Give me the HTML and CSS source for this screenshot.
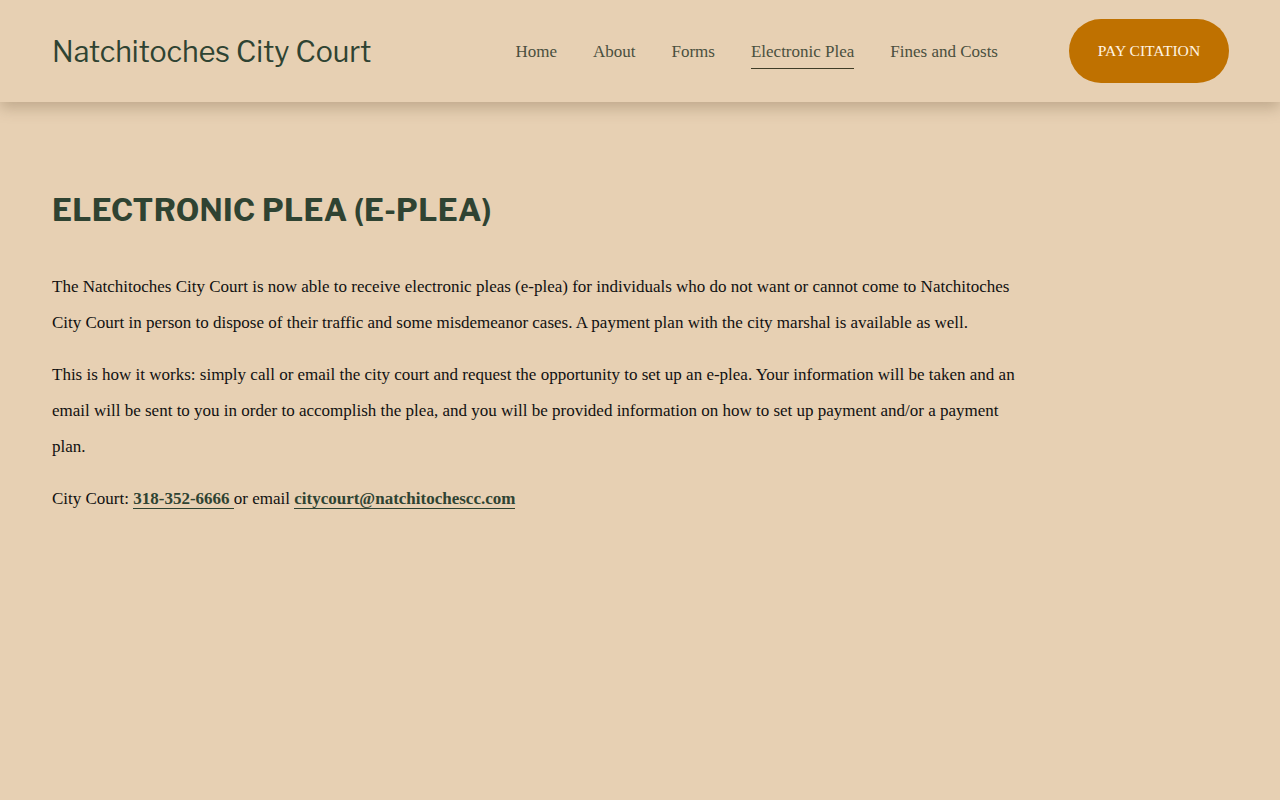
FILE: index.html
```html
<!DOCTYPE html>
<html lang="en">
<head>
<meta charset="utf-8">
<title>Electronic Plea — Natchitoches City Court</title>
<link rel="stylesheet" href="styles.css">
</head>
<body>
<header class="site-header">
  <a class="site-title" href="#">Natchitoches City Court</a>
  <nav class="main-nav">
    <a href="#">Home</a>
    <a href="#">About</a>
    <a href="#">Forms</a>
    <a href="#" class="active">Electronic Plea</a>
    <a href="#">Fines and Costs</a>
  </nav>
  <a class="pay-btn" href="#">PAY CITATION</a>
</header>
<main class="content">
  <h1 class="page-heading">ELECTRONIC PLEA (E-PLEA)</h1>
  <p>The Natchitoches City Court is now able to receive electronic pleas (e-plea) for individuals who do not want or cannot come to Natchitoches City Court in person to dispose of their traffic and some misdemeanor cases. A payment plan with the city marshal is available as well.</p>
  <p>This is how it works: simply call or email the city court and request the opportunity to set up an e-plea. Your information will be taken and an email will be sent to you in order to accomplish the plea, and you will be provided information on how to set up payment and/or a payment plan.</p>
  <p>City Court: <a class="contact-link" href="#">318-352-6666 </a>or email <a class="contact-link" href="#">citycourt@natchitochescc.com</a></p>
</main>
</body>
</html>
```
FILE: styles.css
```css
html, body {
  margin: 0;
  padding: 0;
}
body {
  background: #e7d0b3;
  color: #111;
  font-family: "Liberation Serif", "Times New Roman", serif;
  min-height: 800px;
}
a { text-decoration: none; }

.site-header {
  height: 102px;
  box-sizing: border-box;
  display: flex;
  align-items: center;
  padding: 0 51px 0 52px;
  background: #e7d0b3;
  box-shadow: 0 6px 14px rgba(90, 70, 40, 0.28);
  position: relative;
  z-index: 1;
}
.site-title {
  font-family: "Libre Franklin", "Open Sans", sans-serif;
  font-size: 28.6px;
  color: #2f4332;
}
.main-nav {
  margin-left: auto;
  display: flex;
  gap: 36px;
  margin-right: 71px;
}
.main-nav a {
  font-size: 17px;
  color: #4a4f3e;
  padding: 8px 0 6px;
  border-bottom: 1px solid transparent;
}
.main-nav a.active {
  border-bottom-color: #3f3c27;
}
.pay-btn {
  width: 160px;
  height: 64px;
  border-radius: 32px;
  background: #bf7100;
  color: #fff4e2;
  font-size: 15.6px;
  display: flex;
  align-items: center;
  justify-content: center;
}

.content {
  padding: 90px 52px 0;
  max-width: 975px;
}
.page-heading {
  font-family: "Libre Franklin", "Inter", sans-serif;
  font-weight: 700;
  font-size: 30.5px;
  color: #2f4332;
  margin: 0 0 40px;
  letter-spacing: 0.3px;
}
.content p {
  font-size: 17px;
  line-height: 36px;
  margin: 0 0 16px;
}
.contact-link {
  color: #2f4332;
  font-weight: 700;
  border-bottom: 1px solid #2f4332;
}
```
